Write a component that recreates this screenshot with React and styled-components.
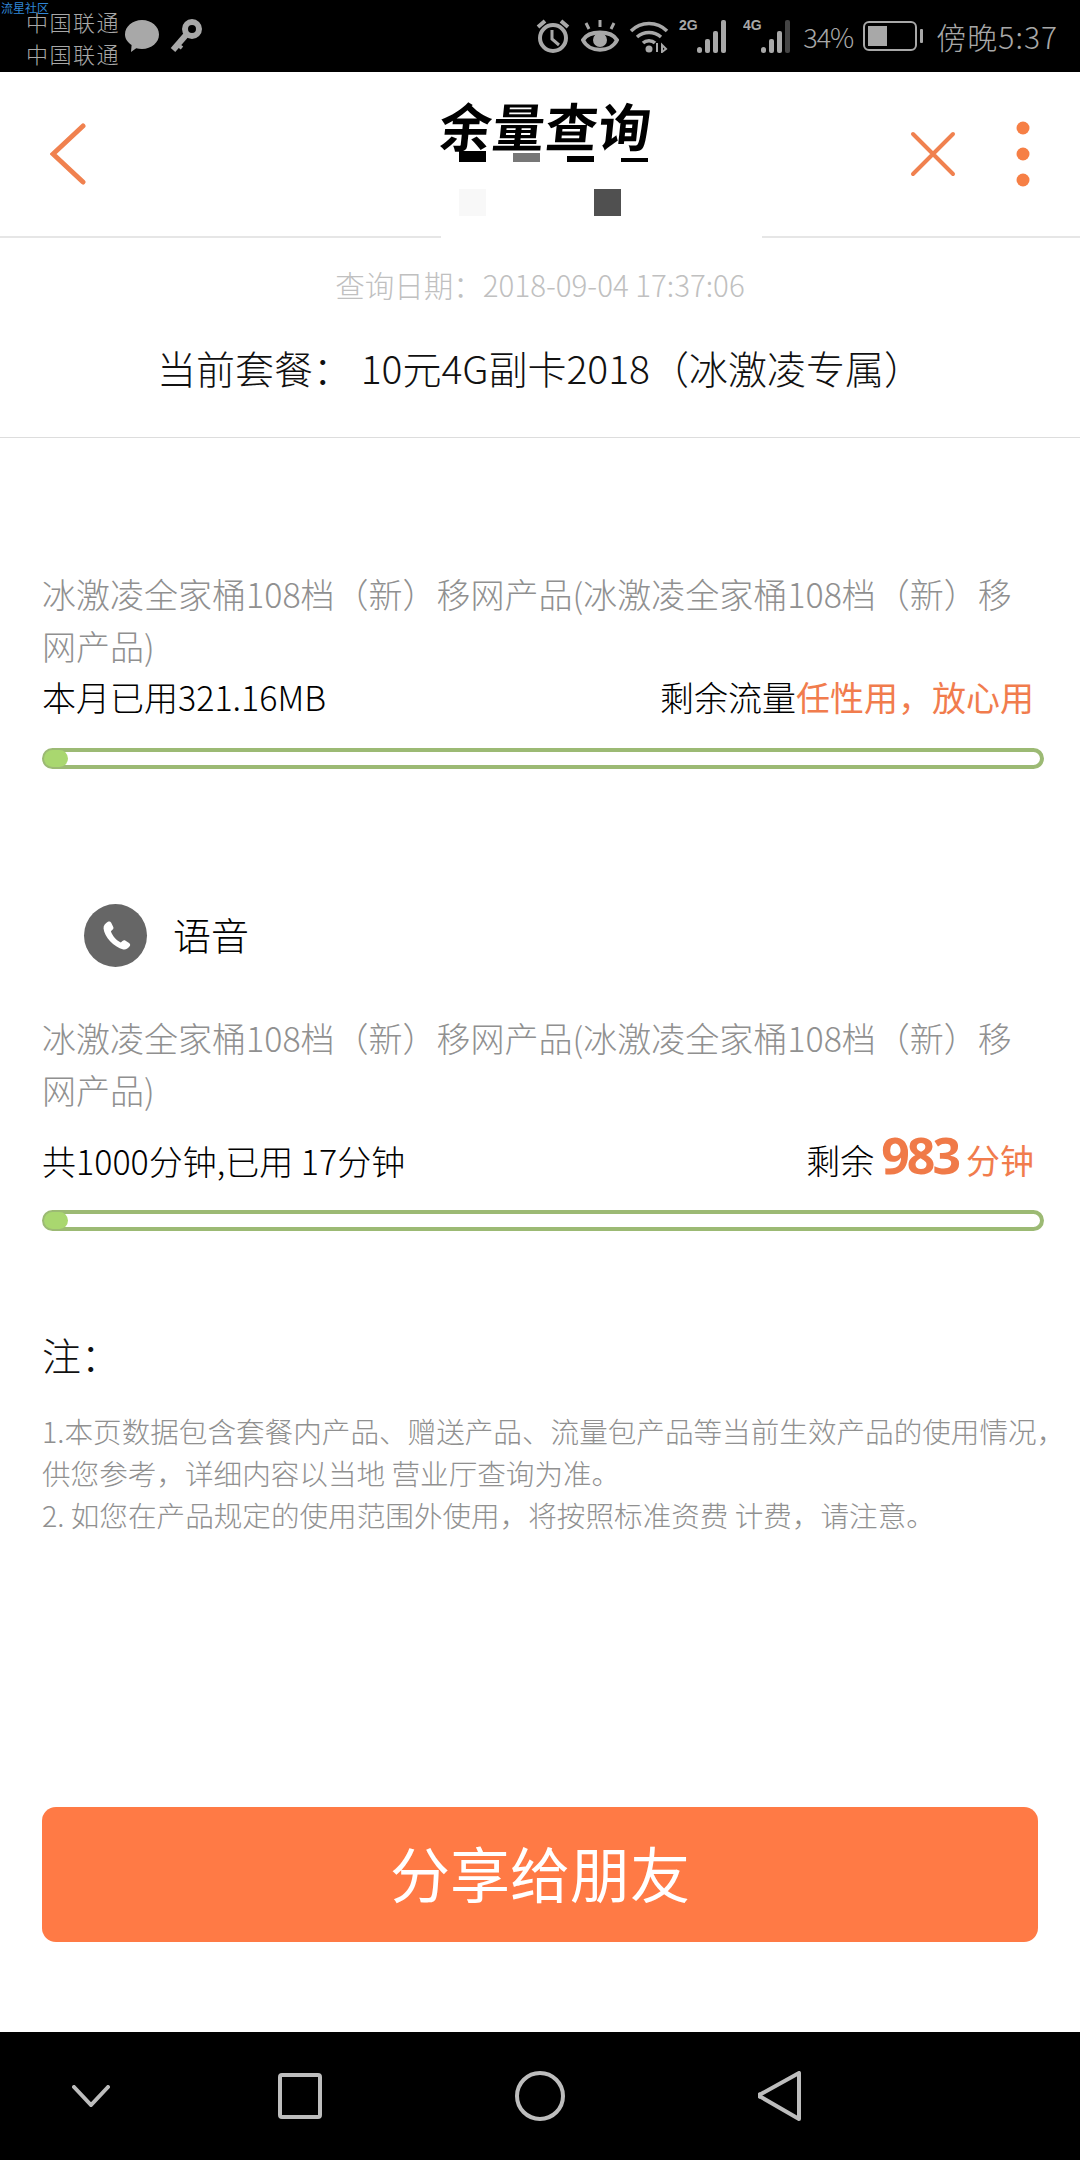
import React from "react";
import styled, { createGlobalStyle } from "styled-components";

const DESC = "冰激凌全家桶108档\uFF08新\uFF09移网产品(冰激凌全家桶108档\uFF08新\uFF09移网产品)";
const NOTE_1 = "1.本页数据包含套餐内产品、赠送产品、流量包产品等当前生效产品的使用情况\uFF0C";
const NOTE_2 = "供您参考\uFF0C详细内容以当地 营业厅查询为准。";
const NOTE_3 = "2. 如您在产品规定的使用范围外使用\uFF0C将按照标准资费 计费\uFF0C请注意。";

const Global = createGlobalStyle`
  html, body { margin: 0; padding: 0; background: #fff; }
  * { box-sizing: border-box; }
`;
const Page = styled.div`
  width: 1080px; height: 2160px; display: flex; flex-direction: column; background: #fff; overflow: hidden;
  font-family: "Noto Sans CJK SC", "Noto Sans", sans-serif; color: #111;
`;
const StatusBar = styled.header`
  position: relative; height: 72px; background: #000; color: #a8a8a8; display: flex; align-items: center; justify-content: space-between; padding: 0 22px 0 26px; flex: none;
`;
const Watermark = styled.span`
  position: absolute; left: 1px; top: 0; font-size: 12px; line-height: 16px; color: #2f86d6;
`;
const Group = styled.div`display: flex; align-items: center;`;
const Carrier = styled.div`
  font-family: "Noto Sans CJK SC", sans-serif; font-weight: 300; font-size: 22px; line-height: 32px; letter-spacing: 1.500px; margin-right: 4px; padding-top: 1px;
`;
const Ico = styled.svg`display: block; flex: none; margin-left: ${p => p.$ml || 0}px; margin-right: ${p => p.$mr || 0}px;`;
const Percent = styled.span`font-family: "Noto Sans CJK SC", sans-serif; font-weight: 300; font-size: 27px; margin-left: 6px; letter-spacing: -1px;`;
const Clock = styled.span`font-size: 30px; margin-left: 13px; font-weight: 300; letter-spacing: 1px;`;

const NavBar = styled.nav`
  position: relative; height: 166px; flex: none; display: flex; align-items: center; justify-content: space-between; padding: 0 50px 0 50px; border-bottom: 2px solid #e6e6e6;
`;
const NavGap = styled.div`position: absolute; left: 441px; width: 321px; bottom: -2px; height: 2px; background: #fff;`;
const TitleWrap = styled.div`position: absolute; left: 440px; top: 22px; width: 220px; height: 130px;`;
const Title = styled.h1`
  margin: 0; font-size: 52px; line-height: 62px; font-weight: 700; color: #000; letter-spacing: 1px; white-space: nowrap; transform: skewX(-6deg);
`;
const Block = styled.i`
  position: absolute; left: ${p => p.$x - 440}px; top: ${p => p.$y - 94}px; width: 27px; height: ${p => p.$h}px; background: ${p => p.$c};
`;
const NavRight = styled.div`display: flex; align-items: center; gap: 60px;`;

const Info = styled.section`flex: none; text-align: center; padding: 23px 0 40px; border-bottom: 1px solid #ddd;`;
const DateLine = styled.div`font-size: 29.500px; line-height: 46px; color: #c0c0c0; font-weight: 300;`;
const Plan = styled.div`font-size: 39px; line-height: 60px; margin-top: 30px; color: #111; font-weight: 300;`;

const Main = styled.main`flex: 1; display: flex; flex-direction: column; padding: 0 0 90px 42px;`;
const Desc = styled.p`
  margin: ${p => p.$mt}px 36px 0 0; font-size: 34px; line-height: 52px; color: #909090; font-weight: 300;
`;
const Row = styled.div`
  display: flex; justify-content: space-between; align-items: center; margin: ${p => p.$mt || 0}px 46px 0 0; height: ${p => p.$h}px; font-size: 34px; color: #000; font-weight: 300;
`;
const RemainEnd = styled.span`margin-bottom: 6px;`;
const Accent = styled.span`color: #f17c4d; font-weight: 400;`;
const BigNum = styled.span`color: #f07a48; font-size: 50px; font-weight: 700; margin: 0 8px 0 7px; letter-spacing: -3px; font-family: "Noto Sans", sans-serif; line-height: 1;`;
const Track = styled.div`
  margin: ${p => p.$mt}px 36px 0 0; height: 21px; border: 4px solid #9cba74; border-radius: 11px; position: relative;
`;
const Knob = styled.div`position: absolute; left: -2px; top: -2px; bottom: -2px; border-radius: 9px; background: #a9d76f;`;
const VoiceHead = styled.div`display: flex; align-items: center; gap: 26px; margin: 135px 0 0 42px; height: 63px;`;
const VoiceDot = styled.div`
  width: 63px; height: 63px; border-radius: 50%; background: #666; display: flex; align-items: center; justify-content: center;
`;
const VoiceLabel = styled.span`font-size: 38px; color: #000; font-weight: 300; padding-bottom: 5px;`;
const NoteHead = styled.div`font-size: 39px; line-height: 50px; margin-top: 98px; color: #111; font-weight: 300;`;
const Notes = styled.p`margin: 31px 0 0; font-size: 28.600px; line-height: 42px; color: #909090; font-weight: 300; white-space: nowrap;`;
const Share = styled.button`
  margin: auto 0 0 0; width: 996px; height: 135px; border: 0; padding: 0 0 7px; border-radius: 14px; background: #ff7a45; color: #fff; font: 400 60px "Noto Sans CJK SC", sans-serif; flex: none;
`;
const BottomBar = styled.footer`
  height: 128px; flex: none; background: #000; display: flex; align-items: center; gap: 193px; padding: 0 0 0 72px;
`;

const Alarm = () => (
  <Ico width="34" height="36" viewBox="0 0 34 36" fill="none" stroke="#a8a8a8">
    <circle cx="17" cy="20" r="13" strokeWidth="4" />
    <path d="M16 12v9l7 6" strokeWidth="3" />
    <path d="M2 9l7-6M32 9l-7-6" strokeWidth="4" />
  </Ico>
);
const Eye = () => (
  <Ico $ml={11} width="38" height="36" viewBox="0 0 38 36" fill="none" stroke="#a8a8a8">
    <path d="M2 22C8 12 30 12 36 22C30 35 8 35 2 22Z" strokeWidth="4" />
    <circle cx="19" cy="22" r="7" fill="#a8a8a8" stroke="none" />
    <path d="M8 11l-3-6M19 9V2M30 11l3-6" strokeWidth="3" />
  </Ico>
);
const Wifi = () => (
  <Ico $ml={10} width="40" height="34" viewBox="0 0 40 34" fill="none" stroke="#a8a8a8">
    <path d="M2 12C12 2 28 2 38 12M8 18c7-6 17-6 24 0M14 24c3-3 9-3 12 0" strokeWidth="3.5" />
    <circle cx="20" cy="30" r="3.5" fill="#a8a8a8" stroke="none" />
    <path d="M28 33V24M33 33v-7l4 4z" strokeWidth="2" />
  </Ico>
);
const Signal = ({ ml, label, fade }) => (
  <Ico $ml={ml} width="54" height="38" viewBox="0 0 54 38" fill="#a8a8a8">
    <text x="0" y="13" fontSize="14" fontWeight="700" fontFamily="Liberation Sans">{label}</text>
    <rect x="18" y="30" width="5" height="6" rx="2.500" />
    <rect x="26" y="22" width="5" height="14" rx="2" />
    <rect x="34" y="14" width="5" height="22" rx="2" />
    <rect x="42" y="3" width="5" height="33" rx="2" fill={fade ? "#444" : "#a8a8a8"} />
  </Ico>
);
const Battery = () => (
  <Ico $ml={10} width="60" height="30" viewBox="0 0 60 30" fill="none">
    <rect x="1" y="1" width="52" height="28" rx="5" stroke="#a8a8a8" strokeWidth="2" />
    <rect x="5" y="5" width="19" height="20" fill="#a8a8a8" />
    <rect x="57" y="8" width="3" height="14" rx="1" fill="#a8a8a8" />
  </Ico>
);

export default function App() {
  return (
    <Page>
      <Global />
      <StatusBar>
        <Watermark>流星社区</Watermark>
        <Group>
          <Carrier>中国联通<br />中国联通</Carrier>
          <Ico width="36" height="34" viewBox="0 0 36 34" fill="#a8a8a8">
            <path d="M18 1c9.500 0 17 6.500 17 14.500S27.500 30 18 30c-2 0-4-.3-5.800-.8L7 33l.6-7C3.500 23.300 1 19.600 1 15.500 1 7.500 8.500 1 18 1z" />
          </Ico>
          <Ico $ml={10} width="32" height="36" viewBox="0 0 32 36" fill="none" stroke="#a8a8a8">
            <circle cx="22" cy="11" r="7" strokeWidth="6" />
            <path d="M16 17L3 32" strokeWidth="6" />
            <path d="M8 27l4 3" strokeWidth="4" />
          </Ico>
        </Group>
        <Group>
          <Alarm />
          <Eye />
          <Wifi />
          <Signal ml={10} label="2G" />
          <Signal ml={10} label="4G" fade />
          <Percent>34%</Percent>
          <Battery />
          <Clock>傍晚5:37</Clock>
        </Group>
      </StatusBar>

      <NavBar>
        <Ico width="36" height="62" viewBox="0 0 36 62" fill="none" stroke="#f0814f" strokeWidth="5" strokeLinecap="round">
          <path d="M33 3L3 31l30 28" />
        </Ico>
        <TitleWrap>
          <Title>余量查询</Title>
          <Block $x={459} $y={151} $h={11} $c="#000" />
          <Block $x={513} $y={153} $h={9} $c="#777" />
          <Block $x={567} $y={156} $h={6} $c="#000" />
          <Block $x={621} $y={158} $h={4} $c="#000" />
          <Block $x={459} $y={189} $h={27} $c="#f8f8f8" />
          <Block $x={594} $y={189} $h={27} $c="#505050" />
        </TitleWrap>
        <NavRight>
          <Ico width="46" height="46" viewBox="0 0 46 46" stroke="#f0814f" strokeWidth="4" strokeLinecap="round">
            <path d="M3 3l40 40M43 3L3 43" />
          </Ico>
          <Ico width="14" height="66" viewBox="0 0 14 66" fill="#f67f45">
            <circle cx="7" cy="7" r="6.500" />
            <circle cx="7" cy="33" r="6.500" />
            <circle cx="7" cy="59" r="6.500" />
          </Ico>
        </NavRight>
        <NavGap />
      </NavBar>

      <Info>
        <DateLine>{"查询日期\uFF1A2018-09-04 17:37:06"}</DateLine>
        <Plan>{"当前套餐\uFF1A 10元4G副卡2018\uFF08冰激凌专属\uFF09"}</Plan>
      </Info>

      <Main>
        <Desc $mt={130}>{DESC}</Desc>
        <Row $h={48}>
          <span>本月已用321.16MB</span>
          <span>剩余流量<Accent>{"任性用\uFF0C放心用"}</Accent></span>
        </Row>
        <Track $mt={28}><Knob style={{ width: 24 }} /></Track>

        <VoiceHead>
          <VoiceDot>
            <Ico width="36" height="36" viewBox="0 0 24 24" fill="#fff">
              <path d="M6.600 2.500c.9-.5 1.700-.2 2.200.7l1.300 2.600c.4.800.2 1.500-.5 2.100l-1 .9c.9 2.900 3.600 6.100 6.600 7.500l1.100-1c.6-.6 1.400-.7 2.100-.2l2.300 1.600c.8.600 1 1.400.4 2.200-1 1.500-2.500 2.400-4.200 2.100C10.400 19.300 4.300 12.700 3.700 7c-.2-2 1.300-3.600 2.900-4.500z" />
            </Ico>
          </VoiceDot>
          <VoiceLabel>语音</VoiceLabel>
        </VoiceHead>
        <Desc $mt={45}>{DESC}</Desc>
        <Row $h={60} $mt={14}>
          <span>共1000分钟,已用 17分钟</span>
          <RemainEnd>剩余<BigNum>983</BigNum><Accent>分钟</Accent></RemainEnd>
        </Row>
        <Track $mt={20}><Knob style={{ width: 24 }} /></Track>

        <NoteHead>{"注\uFF1A"}</NoteHead>
        <Notes>
          {NOTE_1}<br />
          {NOTE_2}<br />
          {NOTE_3}
        </Notes>
        <Share>分享给朋友</Share>
      </Main>

      <BottomBar>
        <Ico $mr={-25} width="38" height="22" viewBox="0 0 38 22" fill="none" stroke="#bdbdbd" strokeWidth="4" strokeLinecap="round">
          <path d="M2 2l17 18L36 2" />
        </Ico>
        <Ico width="44" height="46" viewBox="0 0 44 46" fill="none" stroke="#bdbdbd" strokeWidth="4">
          <rect x="2" y="2" width="40" height="42" rx="2" />
        </Ico>
        <Ico width="50" height="50" viewBox="0 0 50 50" fill="none" stroke="#bdbdbd" strokeWidth="4">
          <circle cx="25" cy="25" r="23" />
        </Ico>
        <Ico width="44" height="50" viewBox="0 0 44 50" fill="none" stroke="#bdbdbd" strokeWidth="4" strokeLinejoin="round">
          <path d="M41 2v46L3 26a1.500 1.500 0 0 1 0-3z" />
        </Ico>
      </BottomBar>
    </Page>
  );
}
